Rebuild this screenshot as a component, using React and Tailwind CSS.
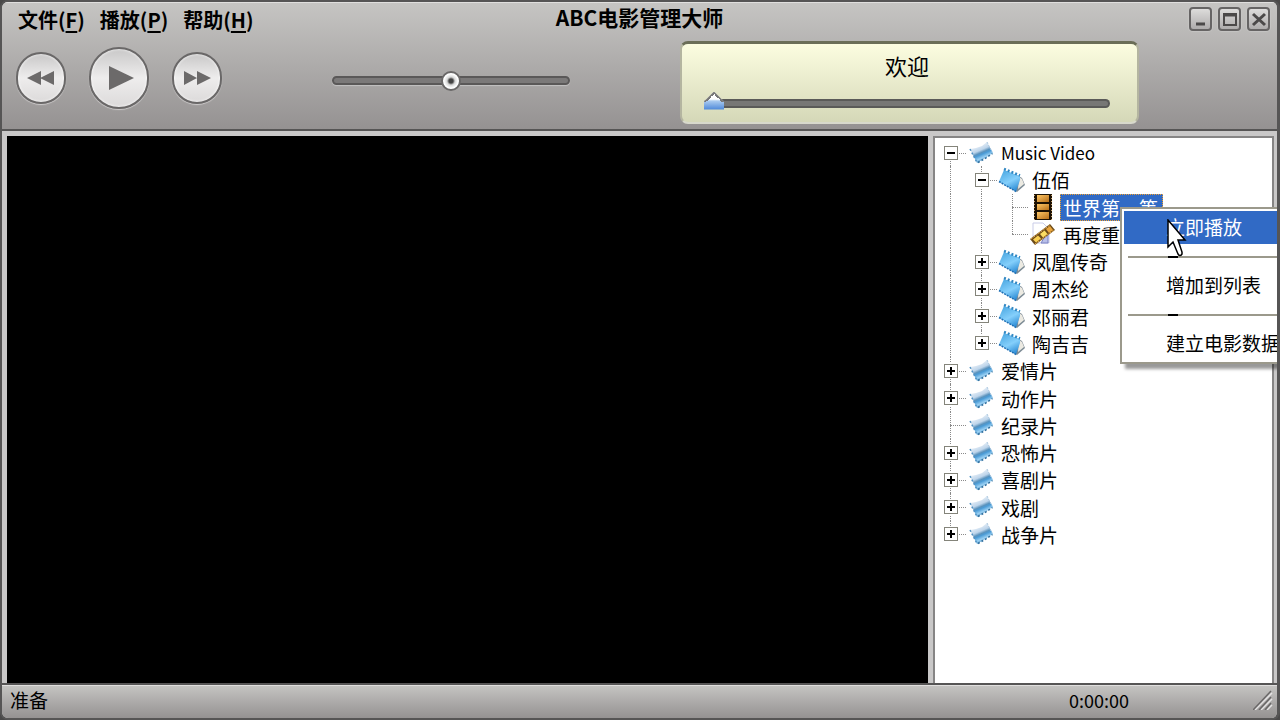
import { useState } from 'react';

const menus = [
  { label: '文件', key: 'F' },
  { label: '播放', key: 'P' },
  { label: '帮助', key: 'H' },
];

// lines: one entry per indent column, "full" passes through, "end" stops at the row, "start" begins there
const rows = [
  { name: 'Music Video', level: 0, type: 'reel', box: 'minus', lines: ['start'] },
  { name: '伍佰', level: 1, type: 'folder', box: 'minus', lines: ['full', 'full'] },
  { name: '世界第一等', level: 2, type: 'film', lines: ['full', 'full', 'full'] },
  { name: '再度重相逢', level: 2, type: 'clip', lines: ['full', 'full', 'end'] },
  { name: '凤凰传奇', level: 1, type: 'folder', box: 'plus', lines: ['full', 'full'] },
  { name: '周杰纶', level: 1, type: 'folder', box: 'plus', lines: ['full', 'full'] },
  { name: '邓丽君', level: 1, type: 'folder', box: 'plus', lines: ['full', 'full'] },
  { name: '陶吉吉', level: 1, type: 'folder', box: 'plus', lines: ['full', 'end'] },
  { name: '爱情片', level: 0, type: 'reel', box: 'plus', lines: ['full'] },
  { name: '动作片', level: 0, type: 'reel', box: 'plus', lines: ['full'] },
  { name: '纪录片', level: 0, type: 'reel', lines: ['full'] },
  { name: '恐怖片', level: 0, type: 'reel', box: 'plus', lines: ['full'] },
  { name: '喜剧片', level: 0, type: 'reel', box: 'plus', lines: ['full'] },
  { name: '戏剧', level: 0, type: 'reel', box: 'plus', lines: ['full'] },
  { name: '战争片', level: 0, type: 'reel', box: 'plus', lines: ['end'] },
];

const lineSpan = {
  full: 'top-0 bottom-0',
  end: 'top-0 bottom-1/2',
  start: 'top-1/2 bottom-0',
};

const ReelIcon = () => (
  <svg viewBox="0 0 26 24" className="w-[26px] h-6">
    <defs>
      <linearGradient id="reel" gradientUnits="userSpaceOnUse" x1="9" y1="3" x2="16" y2="19">
        <stop offset="0" stopColor="#f1f6fb" />
        <stop offset="0.4" stopColor="#bdd4ea" />
        <stop offset="0.55" stopColor="#5b93bd" />
        <stop offset="0.65" stopColor="#4a9bd6" />
        <stop offset="0.85" stopColor="#9ad0f3" />
        <stop offset="1" stopColor="#5c9fce" />
      </linearGradient>
    </defs>
    <path d="M2 8 L8 7 L14 5 L19 1 L25 12 L17 17 L9 22 Z" fill="url(#reel)" />
    <path d="M10 21.5 L17 17.5 L24.5 12.5" stroke="#2f6f9f" strokeWidth="1.5" strokeDasharray="2 2" fill="none" />
    <path d="M2 8 L9 21.5" stroke="#4f90c2" strokeWidth="1.5" strokeDasharray="2 2" />
    <path d="M19 1 L24 11" stroke="#a9c6de" strokeDasharray="2 1.5" />
  </svg>
);

const FolderIcon = () => (
  <svg viewBox="0 0 28 26" className="w-7 h-[26px]">
    <defs>
      <linearGradient id="folder" x1="0.2" y1="0" x2="0.7" y2="1">
        <stop offset="0" stopColor="#4ba8e2" />
        <stop offset="0.55" stopColor="#84cffb" />
        <stop offset="1" stopColor="#2a8ad4" />
      </linearGradient>
    </defs>
    <path d="M19 8 L24 11 L27 18 L19 25 L14 22 Z" fill="#7d8b95" />
    <path d="M21 10 L24 12 L26 17 L20 22 Z" fill="#eceae2" />
    <path d="M6 3 L22 9 L22 13 L18 24.5 L1 14.5 Z" fill="url(#folder)" />
    <path d="M6 2 L22 8.5" stroke="#2f86c2" strokeWidth="2.5" strokeDasharray="2 2" />
    <path d="M1 14.5 L18 24.5" stroke="#1f6fb4" strokeWidth="1.5" strokeDasharray="2 1" />
  </svg>
);

const FilmIcon = () => (
  <svg viewBox="0 0 20 26" className="w-5 h-[26px]">
    <defs>
      <linearGradient id="film" x1="0" y1="0" x2="1" y2="1">
        <stop offset="0" stopColor="#ffc765" />
        <stop offset="1" stopColor="#b8701a" />
      </linearGradient>
    </defs>
    <rect x="1" width="18" height="26" fill="#1d1204" />
    <rect x="4" y="1" width="12" height="7" fill="url(#film)" />
    <rect x="4" y="10" width="12" height="6" fill="url(#film)" />
    <rect x="4" y="18" width="12" height="7" fill="url(#film)" />
    <path d="M1.5 1 V26 M18.5 1 V26" stroke="#c9a26a" strokeDasharray="1 2" />
  </svg>
);

const ClipIcon = () => (
  <svg viewBox="0 0 26 26" className="w-[26px] h-[26px]">
    <path d="M3 2 H13 L19 8 V22 H3 Z" fill="#fff" stroke="#c9cce8" />
    <path d="M14 17 L18 12 V22 H11 Z" fill="#b9bfe8" stroke="#7a82c4" />
    <path d="M0 18 L20 3 L25 9 L5 24 Z" fill="#6b4a18" />
    <path d="M3 18.5 L8 14.5 L11 17.5 L6 21.5 Z" fill="#f9cf52" />
    <path d="M10 13 L14.5 9.5 L17.5 13 L13 16.5 Z" fill="#fbdc62" />
    <path d="M16 8 L20 5 L23 9 L19 12 Z" fill="#e9a53c" />
    <path d="M1 18 L20 4 M5 23 L24 9" stroke="#e8ad4c" strokeDasharray="2 1" />
  </svg>
);

const icons = { reel: ReelIcon, folder: FolderIcon, film: FilmIcon, clip: ClipIcon };

const RoundButton = ({ label, big, children }) => (
  <button
    aria-label={label}
    className={`flex items-center justify-center rounded-full border-2 border-[#6a6868] bg-linear-to-b from-[#c9c8c8] via-[#eeeded] to-[#dcdada] shadow-[inset_0_0_3px_#fff,0_1px_1px_#cfcdcd] ${
      big ? 'w-[60px] h-[62px]' : 'w-[50px] h-[52px]'
    }`}
  >
    {children}
  </button>
);

const WindowButton = ({ label, children }) => (
  <button
    aria-label={label}
    className="flex items-center justify-center w-[23px] h-6 rounded-sm border-2 border-[#666464] bg-linear-to-b from-[#dddcdb] to-[#aeacac] shadow-[0_0_1px_1px_#c6c5c4]"
  >
    <svg viewBox="0 0 16 16" className="w-4 h-4 shrink-0" fill="none" stroke="#4b4949">
      {children}
    </svg>
  </button>
);

const TreeRow = ({ row, selected, onSelect }) => {
  const Icon = icons[row.type];
  return (
    <li className="flex flex-1 items-center" role="treeitem" aria-selected={selected}>
      {row.lines.map((line, i) => (
        <span key={i} className="relative flex w-[31px] h-full shrink-0 items-center justify-center">
          <span className={`absolute left-[15px] border-l border-dotted border-[#8a8a8a] ${lineSpan[line]}`} />
          {i === row.level && (
            <span className="absolute left-[15px] right-0 top-1/2 border-t border-dotted border-[#8a8a8a]" />
          )}
          {i === row.level && row.box && (
            <button
              aria-label={row.box === 'plus' ? 'Expand' : 'Collapse'}
              className="relative flex w-[14px] h-[14px] items-center justify-center border border-[#84847a] bg-white outline-1 outline-white"
            >
              <svg viewBox="0 0 8 8" className="w-2 h-2" stroke="#000" strokeWidth="2">
                <path d={row.box === 'plus' ? 'M0 4H8M4 0V8' : 'M0 4H8'} />
              </svg>
            </button>
          )}
        </span>
      ))}
      <span className="flex w-[31px] h-0 shrink-0 items-center justify-center pr-[2px]">
        <Icon />
      </span>
      <button
        onClick={onSelect}
        className={`h-[27px] ml-[1px] pl-[2px] pr-1 border border-dotted whitespace-nowrap leading-[25px] ${
          selected ? 'border-[#f0a030] bg-[#316ac5] text-white' : 'border-transparent'
        } ${row.name === 'Music Video' ? 'text-[17px]' : 'text-[19px]'}`}
      >
        {row.name}
      </button>
    </li>
  );
};

const MenuDivider = () => (
  <li role="separator" className="flex h-[25px] items-center pl-1">
    <span className="h-[2px] w-10 bg-[#9b998c]" />
    <span className="h-[2px] w-[10px] bg-black" />
    <span className="h-[2px] flex-1 bg-[#9b998c]" />
  </li>
);

const ContextMenu = () => (
  <ul
    role="menu"
    className="absolute left-[185px] top-[69px] w-[210px] border-2 border-[#9b998c] bg-white p-[2px] text-[19px] shadow-[5px_5px_3px_#00000066]"
  >
    <li>
      <button role="menuitem" className="h-[33px] w-full bg-[#316ac5] pl-[42px] text-left text-white">立即播放</button>
    </li>
    <MenuDivider />
    <li>
      <button role="menuitem" className="h-[33px] w-full pl-[42px] text-left">增加到列表</button>
    </li>
    <MenuDivider />
    <li>
      <button role="menuitem" className="h-[33px] w-full pl-[42px] text-left">建立电影数据</button>
    </li>
    <svg viewBox="0 0 20 40" className="absolute left-[45px] top-[10px] w-5 h-10">
      <path
        d="M1 1 V28 L6 23 L11 35 Q13 38 15 35 V33 L11 21 H18 Z"
        fill="#fff"
        stroke="#000"
        strokeWidth="1.5"
      />
    </svg>
  </ul>
);

const App = () => {
  const [selected, setSelected] = useState('世界第一等');
  const [volume, setVolume] = useState(50);
  const [position, setPosition] = useState(0);

  return (
    <div className="bg-[#4a4949]">
      <div className="relative flex h-screen flex-col overflow-hidden rounded-lg border-2 border-r-3 border-[#565555] bg-[#c9c8c8] font-['Noto_Sans_CJK_SC',sans-serif] text-black">
        {/* Title bar and player controls */}
        <header className="border-b-2 border-[#565555] bg-linear-to-b from-[#c6c5c3] to-[#959292] pb-[5px] shadow-[inset_0_1px_0_#e0dfde]">
          <div className="grid h-[39px] grid-cols-[1fr_auto_1fr] items-start">
            <nav className="flex gap-[15px] pl-4 pt-1 text-[20px] leading-7 font-bold">
              {menus.map((m) => (
                <button key={m.key}>
                  {m.label}(<span className="underline underline-offset-3">{m.key}</span>)
                </button>
              ))}
            </nav>
            <h1 className="pt-[1px] text-[21px] leading-7 font-bold">ABC电影管理大师</h1>
            <div className="flex justify-end gap-[6px] pr-[7px] pt-[5px]">
              <WindowButton label="Minimize">
                <path d="M3 13 H12" strokeWidth="3" />
              </WindowButton>
              <WindowButton label="Maximize">
                <path d="M2 3 H14 V14 H2 Z" strokeWidth="2" />
                <path d="M1 4 H15" strokeWidth="3" />
              </WindowButton>
              <WindowButton label="Close">
                <path d="M2 3 L14 14 M14 3 L2 14" strokeWidth="3" />
              </WindowButton>
            </div>
          </div>

          <div className="flex gap-[110px] pl-[14px] pr-[138px]">
            <div className="flex h-[74px] items-center gap-[23px]">
              <RoundButton label="Previous">
                <svg viewBox="0 0 28 16" className="w-7 h-4" fill="#6c6a6a">
                  <path d="M0 8 L14 1 V15 Z M13 8 L27 1 V15 Z" />
                </svg>
              </RoundButton>
              <RoundButton label="Play" big>
                <svg viewBox="0 0 26 26" className="ml-1 w-[26px] h-[26px]" fill="#6c6a6a">
                  <path d="M1 1 L26 13 L1 25 Z" />
                </svg>
              </RoundButton>
              <RoundButton label="Next">
                <svg viewBox="0 0 28 16" className="w-7 h-4" fill="#6c6a6a">
                  <path d="M28 8 L14 1 V15 Z M14 8 L1 1 V15 Z" />
                </svg>
              </RoundButton>
            </div>
            <input
              type="range"
              aria-label="Volume"
              value={volume}
              onChange={(e) => setVolume(e.target.value)}
              className="mt-[29px] h-5 w-[238px] appearance-none bg-transparent [&::-webkit-slider-runnable-track]:h-[9px] [&::-webkit-slider-runnable-track]:rounded-full [&::-webkit-slider-runnable-track]:border-2 [&::-webkit-slider-runnable-track]:border-[#5a5858] [&::-webkit-slider-runnable-track]:bg-[#7b7979] [&::-webkit-slider-runnable-track]:shadow-[0_1px_1px_#c4c2c2] [&::-webkit-slider-thumb]:-mt-[7px] [&::-webkit-slider-thumb]:h-5 [&::-webkit-slider-thumb]:w-5 [&::-webkit-slider-thumb]:appearance-none [&::-webkit-slider-thumb]:rounded-full [&::-webkit-slider-thumb]:border-2 [&::-webkit-slider-thumb]:border-[#6a6868] [&::-webkit-slider-thumb]:bg-[radial-gradient(circle,#444_0_2px,#d8d8d8_4px,#fff_7px)]"
            />
            <div className="flex h-[83px] flex-1 flex-col items-center rounded-lg border-2 border-t-3 border-[#b4b5a0] border-t-[#6b6e57] border-b-[#d8d9cc] bg-linear-to-b from-[#fcfde0] to-[#d5d8b8] pl-[22px] pr-[27px]">
              <p className="h-[49px] pt-[5px] text-[22px] leading-8">欢迎</p>
              <input
                type="range"
                aria-label="Position"
                value={position}
                onChange={(e) => setPosition(e.target.value)}
                className="h-5 w-full appearance-none bg-transparent [&::-webkit-slider-runnable-track]:h-[9px] [&::-webkit-slider-runnable-track]:rounded-full [&::-webkit-slider-runnable-track]:border-2 [&::-webkit-slider-runnable-track]:border-l-0 [&::-webkit-slider-runnable-track]:border-[#5a5a58] [&::-webkit-slider-runnable-track]:bg-[#777775] [&::-webkit-slider-thumb]:-mt-[9px] [&::-webkit-slider-thumb]:h-[18px] [&::-webkit-slider-thumb]:w-5 [&::-webkit-slider-thumb]:appearance-none [&::-webkit-slider-thumb]:[clip-path:polygon(50%_0,100%_56%,100%_100%,0_100%,0_56%)] [&::-webkit-slider-thumb]:bg-[linear-gradient(135deg,#777_60%,transparent_60%),linear-gradient(225deg,#777_60%,transparent_60%),linear-gradient(180deg,#fff_40%,#a9cbf0_50%,#4a86d8)] [&::-webkit-slider-thumb]:bg-[size:10px_10px,10px_10px,20px_18px] [&::-webkit-slider-thumb]:bg-[position:0_0,10px_0,0_0] [&::-webkit-slider-thumb]:bg-no-repeat"
              />
            </div>
          </div>
        </header>

        {/* Video and library */}
        <main className="flex min-h-0 flex-1 gap-[5px] pl-[5px] pr-[3px] pt-[5px]">
          <div className="flex-1 bg-black" />
          <aside className="relative w-[341px] border-2 border-b-0 border-[#868585] bg-white">
            <ul role="tree" className="mt-[1px] flex h-[409px] flex-col">
              {rows.map((row) => (
                <TreeRow
                  key={row.name}
                  row={row}
                  selected={row.name === selected}
                  onSelect={() => setSelected(row.name)}
                />
              ))}
            </ul>
            <ContextMenu />
          </aside>
        </main>

        <footer className="flex h-[35px] items-center border-t-2 border-[#565555] bg-linear-to-b from-[#c6c5c3] to-[#959292] pb-1 pl-2 pr-1 text-[19px] leading-7 shadow-[inset_0_1px_0_#e0dfde]">
          <span className="flex-1">准备</span>
          <span className="mr-[124px] text-[18px]">0:00:00</span>
          <svg viewBox="0 0 20 20" className="w-5 h-5" strokeWidth="1.5">
            <path d="M2 20 L19 3 M8 20 L19 9 M14 20 L19 15" stroke="#e4e3e3" />
            <path d="M0 20 L18 1 M6 20 L18 7 M12 20 L18 13" stroke="#6a6868" />
          </svg>
        </footer>
      </div>
    </div>
  );
};

export default App;
